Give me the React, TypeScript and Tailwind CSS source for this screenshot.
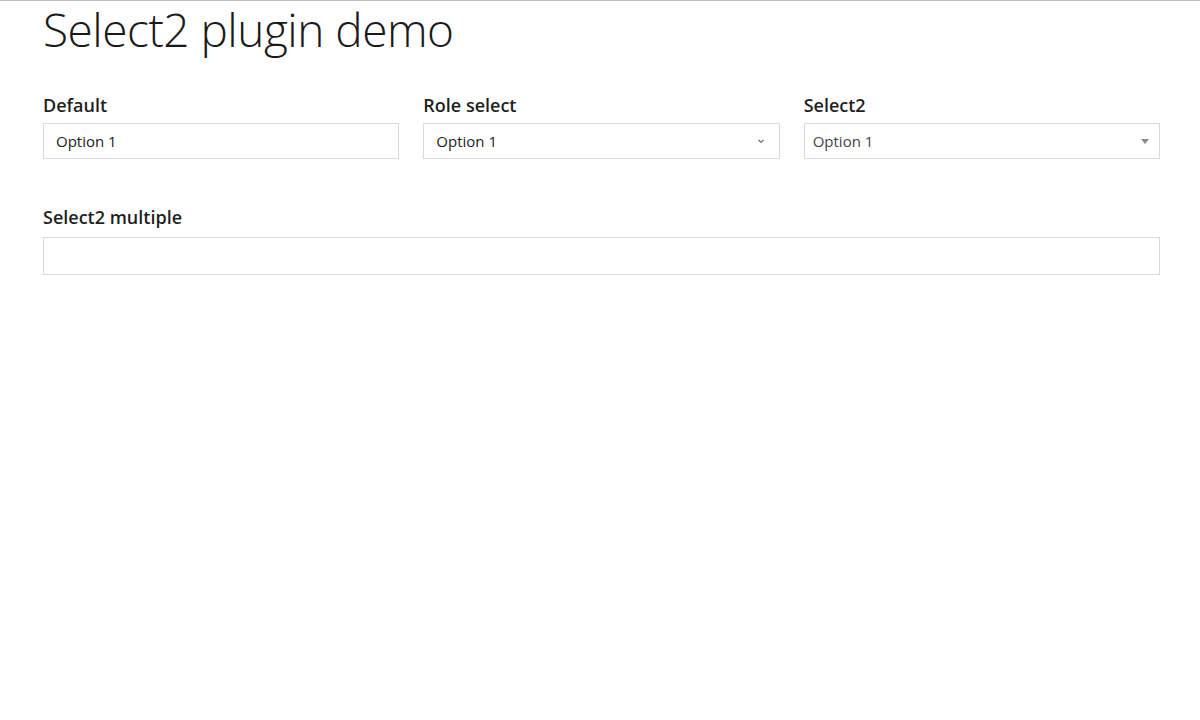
import React from 'react';

const font = { fontFamily: '"Open Sans", "Noto Sans", sans-serif' };

const Field: React.FC<{ label: string; gap?: string; children: React.ReactNode }> = ({ label, gap = 'mb-[6px]', children }) => (
  <div className="flex flex-col">
    <label className={`text-[18px] font-semibold text-[#1f1f1f] leading-[24px] ${gap}`}>{label}</label>
    {children}
  </div>
);

export default function App() {
  return (
    <div className="min-h-[720px] bg-white border-t border-[#bdbdbd] text-[#222]" style={font}>
      <div className="pl-[43px] pr-[40px]">
        <h1 className="text-[46px] font-light leading-[56px] text-[#1a1a1a] tracking-[-0.5px]">
          Select2 plugin demo
        </h1>

        <div className="grid grid-cols-3 gap-x-[24px] mt-[36px]">
          <Field label="Default">
            <div className="h-[36px] border border-[#d9d9d9] flex items-center px-[12px] text-[15px] text-[#222]">
              Option 1
            </div>
          </Field>
          <Field label="Role select">
            <div className="h-[36px] border border-[#d9d9d9] flex items-center justify-between pl-[12px] pr-[14px] text-[15px] text-[#222]">
              <span>Option 1</span>
              <svg width="8" height="6" viewBox="0 0 8 6" fill="none">
                <path d="M1.5 1.8 L4 4.3 L6.5 1.8" stroke="#555" strokeWidth="1.1" />
              </svg>
            </div>
          </Field>
          <Field label="Select2">
            <div className="h-[36px] border border-[#d9d9d9] flex items-center justify-between pl-[8px] pr-[10px] text-[15px] text-[#444]">
              <span>Option 1</span>
              <svg width="8" height="5" viewBox="0 0 8 5">
                <path d="M0 0 H8 L4 5 Z" fill="#888" />
              </svg>
            </div>
          </Field>
        </div>

        <div className="mt-[46px]">
          <Field label="Select2 multiple" gap="mb-[8px]">
            <div className="h-[38px] border border-[#d9d9d9]" />
          </Field>
        </div>
      </div>
    </div>
  );
}
